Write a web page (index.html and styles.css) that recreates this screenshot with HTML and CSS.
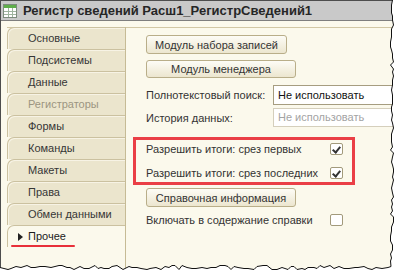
FILE: index.html
```html
<!DOCTYPE html>
<html lang="ru">
<head>
<meta charset="UTF-8">
<title>Регистр сведений</title>
<link rel="stylesheet" href="styles.css">
</head>
<body>

<div class="shot">
    <div class="window">
        <div class="titlebar">
            <svg class="app-icon" width="14" height="14" viewBox="0 0 14 14">
                <rect x="0.5" y="0.5" width="13" height="13" fill="#fff" stroke="#7d8c7d"/>
                <rect x="1" y="1" width="12" height="3" fill="#5fae4a"/>
                <path d="M1 7.5h12M1 10.5h12M5.5 4v9M9.5 4v9" stroke="#9fb49f" stroke-width="1"/>
            </svg>
            <span class="title">Регистр сведений Расш1_РегистрСведений1</span>
        </div>

        <div class="main">
            <ul class="tabs">
                <li>Основные</li>
                <li>Подсистемы</li>
                <li>Данные</li>
                <li class="disabled">Регистраторы</li>
                <li>Формы</li>
                <li>Команды</li>
                <li>Макеты</li>
                <li>Права</li>
                <li>Обмен данными</li>
                <li class="current"><span class="marker"></span>Прочее<span class="underline"></span></li>
            </ul>

            <div class="panel">
                <button class="btn btn-records">Модуль набора записей</button>
                <button class="btn btn-manager">Модуль менеджера</button>

                <div class="field">
                    <span class="label">Полнотекстовый поиск:</span>
                    <div class="input">Не использовать</div>
                </div>
                <div class="field field-history">
                    <span class="label">История данных:</span>
                    <div class="input disabled">Не использовать</div>
                </div>

                <div class="highlight">
                    <div class="check-row">
                        <span class="label">Разрешить итоги: срез первых</span>
                        <span class="check on"></span>
                    </div>
                    <div class="check-row">
                        <span class="label">Разрешить итоги: срез последних</span>
                        <span class="check on"></span>
                    </div>
                </div>

                <button class="btn btn-help">Справочная информация</button>

                <div class="check-row">
                    <span class="label">Включать в содержание справки</span>
                    <span class="check"></span>
                </div>
            </div>
        </div>
    </div>

    <svg class="torn" width="398" height="273" viewBox="0 0 398 273">
        <path id="torn-fill" fill="#fff"/>
        <path id="torn-line" fill="none" stroke="#111" stroke-width="1"/>
    </svg>
</div>

<script>
// jagged "torn paper" edge on the right and bottom
let seed = 11;
const rnd = () => {
    seed = (seed * 9301 + 49297) % 233280;
    return seed / 233280;
};

const pts = [];
for (let y = 0; y < 264; y += 3 + Math.floor(rnd() * 3)) {
    pts.push([390.5 + Math.round(rnd() * 3), y]);
}
for (let x = 391; x > 0; x -= 3 + Math.floor(rnd() * 4)) {
    pts.push([x, 265.5 + Math.round(rnd() * 4)]);
}
pts.push([0, 267.5]);

const line = pts.map((p, i) => (i ? "L" : "M") + p[0] + "," + p[1]).join(" ");
document.getElementById("torn-line").setAttribute("d", line);
document.getElementById("torn-fill").setAttribute("d",
    "M398,0 " + line.replace(/^M/, "L") + " L0,273 L398,273 Z");
</script>

</body>
</html>
```

FILE: styles.css
```css
* {
    margin: 0;
    padding: 0;
    box-sizing: border-box;
}

body {
    background: #fff;
    font-family: "Liberation Sans", Arial, sans-serif;
    font-size: 11px;
    color: #333;
}

.shot {
    position: relative;
    width: 398px;
    height: 273px;
    overflow: hidden;
}

.window {
    width: 398px;
    height: 273px;
    background: #fbf9ec;
    border-left: 1px solid #4d4d4d;
    border-top: 1px solid #4d4d4d;
    display: flex;
    flex-direction: column;
}

/* Title */
.titlebar {
    height: 20px;
    flex: none;
    background: #c9c9c9;
    border-bottom: 1px solid #7e7e7e;
    display: flex;
    align-items: center;
    padding-left: 2px;
    gap: 6px;
}

.app-icon {
    flex: none;
}

.title {
    font-weight: bold;
    font-size: 13px;
    color: #262626;
    white-space: nowrap;
}

.main {
    flex: 1;
    display: flex;
    margin-top: 6px;
    border-top: 1px solid #d2c7a4;
    margin-left: 6px;
}

/* Tabs */
.tabs {
    list-style: none;
    width: 119px;
    flex: none;
    border-right: 1px solid #c6bb95;
    margin-top: -1px;
}

.tabs li {
    height: 22px;
    line-height: 21px;
    padding-left: 20px;
    background: #ebe5cd;
    border-top: 1px solid #cbc1a0;
    border-left: 1px solid #cbc1a0;
    border-top-left-radius: 7px;
    box-shadow: inset 1px 1px 0 #f7f3e5;
    color: #363636;
    white-space: nowrap;
}

.tabs li.disabled {
    color: #9c9581;
}

.tabs li.current {
    position: relative;
    background: #fbf9ec;
    box-shadow: none;
    color: #1c1c1c;
}

.marker {
    position: absolute;
    left: 10px;
    top: 7px;
    border-left: 5px solid #222;
    border-top: 4px solid transparent;
    border-bottom: 4px solid transparent;
}

.underline {
    position: absolute;
    left: 3px;
    top: 19px;
    width: 64px;
    height: 2px;
    background: #e8303a;
    border-radius: 1px;
}

/* Panel */
.panel {
    flex: 1;
    padding: 7px 0 0 20px;
    display: flex;
    flex-direction: column;
    align-items: flex-start;
    white-space: nowrap;
}

.btn {
    font-family: inherit;
    font-size: 11px;
    color: #333;
    height: 19px;
    width: 150px;
    border: 1px solid #b9ae89;
    border-radius: 3px;
    background: linear-gradient(#fdfcf6, #ece6cf);
}

.btn-records {
    width: 141px;
    margin-bottom: 6px;
}

.btn-manager {
    height: 18px;
}

.field {
    display: flex;
    align-items: center;
    margin-top: 7px;
}

.field-history {
    margin-top: 3px;
}

.field .label {
    width: 127px;
    flex: none;
}

.input {
    width: 140px;
    height: 20px;
    line-height: 18px;
    padding-left: 4px;
    background: #fff;
    border: 1px solid #a69d80;
    color: #111;
}

.input.disabled {
    height: 19px;
    line-height: 17px;
    border-color: #d5cfbc;
    color: #a3a3a3;
}

/* Highlighted pair of options */
.highlight {
    margin: 10px 0 0 -13px;
    width: 222px;
    height: 48px;
    border: 3px solid #ea3f46;
    padding-left: 10px;
    display: flex;
    flex-direction: column;
    gap: 7px;
}

.check-row {
    display: flex;
    align-items: center;
    height: 24px;
}

.highlight .check-row {
    height: 17px;
}

.check-row .label {
    width: 184px;
    flex: none;
}

.check {
    width: 13px;
    height: 12px;
    border: 1px solid #a29a7b;
    border-radius: 2px;
    background: #fff;
    position: relative;
}

.check.on::after {
    content: "";
    position: absolute;
    left: 3px;
    top: 1px;
    width: 3px;
    height: 6px;
    border-right: 2px solid #333;
    border-bottom: 2px solid #333;
    transform: rotate(40deg);
}

.btn-help {
    margin-top: 3px;
    margin-bottom: 1px;
}

.torn {
    position: absolute;
    left: 0;
    top: 0;
}
```
